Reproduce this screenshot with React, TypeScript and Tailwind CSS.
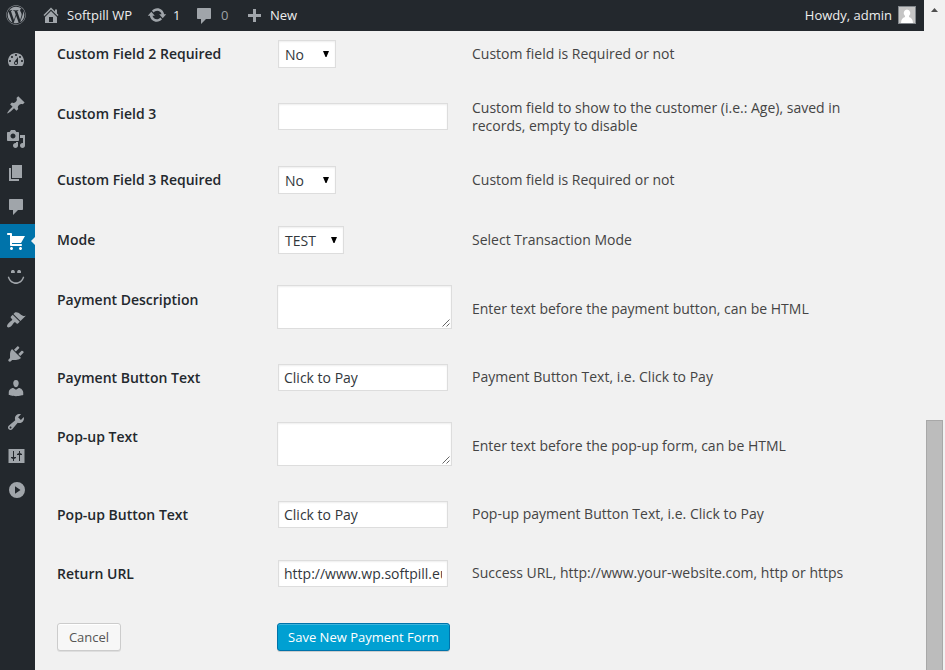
import type { ReactNode } from "react";
import { FaWordpress } from "react-icons/fa";

const icons = {
  home: "M16 8.5l1.53 1.53-1.06 1.06L10 4.6l-6.47 6.49-1.06-1.06L10 2.5l4 4v-2h2v4zm-6-2.46l6 5.99V18H4v-5.97zM12 17v-5H8v5h4z",
  update:
    "M10.2 3.28c3.53 0 6.43 2.61 6.92 6h2.08l-3.5 4-3.5-4h2.32c-.45-1.97-2.21-3.45-4.32-3.45-1.45 0-2.73.71-3.54 1.78L4.95 5.66C6.23 4.2 8.11 3.28 10.2 3.28zm-.4 13.44c-3.52 0-6.43-2.61-6.92-6H.8l3.5-4c1.17 1.33 2.33 2.67 3.5 4H5.48c.45 1.97 2.21 3.45 4.32 3.45 1.45 0 2.73-.71 3.54-1.78l1.71 1.95c-1.28 1.46-3.15 2.38-5.25 2.38z",
  comment: "M4 2h12c.6 0 1 .4 1 1v9c0 .6-.4 1-1 1h-4l-5 5v-5H4c-.6 0-1-.4-1-1V3c0-.6.4-1 1-1z",
  plus: "M17 7v3h-5v5H9v-5H4V7h5V2h3v5h5z",
  dashboard:
    "M3.76 16h12.48c1.1-1.37 1.76-3.11 1.76-5 0-4.42-3.58-8-8-8s-8 3.58-8 8c0 1.89.66 3.63 1.76 5zM10 4c.55 0 1 .45 1 1s-.45 1-1 1-1-.45-1-1 .45-1 1-1zM6 6c.55 0 1 .45 1 1s-.45 1-1 1-1-.45-1-1 .45-1 1-1zm8 0c.55 0 1 .45 1 1s-.45 1-1 1-1-.45-1-1 .45-1 1-1zm-5.37 5.55L12 7v6c0 1.1-.9 2-2 2s-2-.9-2-2c0-.57.24-1.08.63-1.45zM4 10c.55 0 1 .45 1 1s-.45 1-1 1-1-.45-1-1 .45-1 1-1zm12 0c.55 0 1 .45 1 1s-.45 1-1 1-1-.45-1-1 .45-1 1-1zm-5 3c0-.55-.45-1-1-1s-1 .45-1 1 .45 1 1 1 1-.45 1-1z",
  pin: "M10.44 3.02l1.82-1.82 6.36 6.35-1.83 1.82c-1.05-.68-2.48-.57-3.41.36l-.75.75c-.92.93-1.04 2.35-.35 3.41l-1.83 1.82-2.41-2.41-2.8 2.79c-.42.42-3.38 2.71-3.8 2.29s1.86-3.39 2.28-3.81l2.79-2.79L4.1 9.36l1.83-1.82c1.05.69 2.48.57 3.4-.36l.75-.75c.93-.92 1.05-2.35.36-3.41z",
  media:
    "M13 11V4c0-.55-.45-1-1-1h-1.67L9 1H5L3.67 3H2c-.55 0-1 .45-1 1v7c0 .55.45 1 1 1h10c.55 0 1-.45 1-1zM7 4.5c1.38 0 2.5 1.12 2.5 2.5S8.38 9.5 7 9.5 4.5 8.38 4.5 7 5.62 4.5 7 4.5zM14 6h5v10.5c0 1.38-1.12 2.5-2.5 2.5S14 17.88 14 16.500s1.12-2.5 2.5-2.5c.17 0 .34.02.5.05V9h-3V6zm-4 8.05V13h2v3.5c0 1.38-1.12 2.5-2.5 2.5S7 17.88 7 16.500 8.12 14 9.500 14c.17 0 .34.02.5.05z",
  page: "M6 15V2h10v13H6zm-1 1h8v2H3V5h2v11z",
  cart: "M6 13h9c.55 0 1 .45 1 1s-.45 1-1 1H5c-.55 0-1-.45-1-1V4H2c-.55 0-1-.45-1-1s.45-1 1-1h3c.55 0 1 .45 1 1v2h13l-4 7H6v1zm-.5 3c.83 0 1.5.67 1.5 1.5S6.33 19 5.5 19 4 18.33 4 17.5 4.67 16 5.5 16zm9 0c.83 0 1.5.67 1.5 1.500s-.67 1.500-1.500 1.500-1.500-.67-1.500-1.500.67-1.500 1.500-1.500z",
  smiley:
    "M5 8V6.600C5 5.500 5.700 5 6.800 5s2 .5 2 1.600V8zM11.200 8V6.600c0-1.100.8-1.600 1.900-1.600s1.900.5 1.900 1.600V8zM1.700 12C3.200 17 7 19 10 19s6.800-2 8.300-7l-1.300-.5C15.600 15.700 13 17.300 10 17.300S4.400 15.700 3 11.500z",
  brush:
    "M14.48 11.06L7.41 3.99l1.5-1.5c.5-.56 2.3-.47 3.51.32 1.21.8 1.43 1.28 2.91 2.1 1.18.64 2.45 1.26 4.45.85zm-.71.71L6.7 4.7 4.93 6.47c-.39.39-.39 1.02 0 1.41l1.06 1.06c.39.39.39 1.03 0 1.42-.6.6-1.43 1.11-2.21 1.69-.35.26-.7.53-1.01.84C1.43 14.23.4 16.08 1.4 17.07c.99 1 2.84-.03 4.18-1.36.31-.31.58-.66.85-1.02.57-.78 1.08-1.61 1.69-2.21.39-.39 1.02-.39 1.41 0l1.06 1.06c.39.39 1.02.39 1.41 0z",
  plug: "M13.11 4.36L9.87 7.6 8 5.73l3.24-3.24c.35-.34 1.05-.2 1.56.32.52.51.66 1.21.31 1.55zm-8 1.77l.91-1.12 9.01 9.01-1.19.84c-.71.71-2.63 1.16-3.82 1.16H6.14L4.9 17.26c-.59.59-1.54.59-2.12 0-.59-.58-.59-1.53 0-2.12l1.24-1.24v-3.88c0-1.13.4-3.19 1.09-3.89zm7.26 3.97l3.24-3.24c.34-.35 1.04-.21 1.55.31.52.51.66 1.21.31 1.55l-3.24 3.25z",
  user: "M10 9.25c-2.27 0-2.73-3.44-2.73-3.44C7 4.02 7.82 2 9.97 2c2.16 0 2.98 2.02 2.71 3.81 0 0-.41 3.44-2.68 3.44zm0 2.57L12.72 10c2.39 0 4.52 2.33 4.52 4.53v2.49s-3.65 1.13-7.24 1.13c-3.65 0-7.24-1.13-7.24-1.13v-2.49c0-2.25 1.94-4.48 4.47-4.48z",
  wrench:
    "M16.68 9.77c-1.34 1.34-3.3 1.67-4.95.99l-5.41 6.52c-.99.99-2.59.99-3.58 0s-.99-2.59 0-3.57l6.52-5.42c-.68-1.65-.35-3.61.99-4.95 1.28-1.28 3.12-1.62 4.72-1.06l-2.89 2.89 2.82 2.82 2.86-2.87c.53 1.58.18 3.39-1.08 4.65zM3.81 16.21c.4.39 1.04.39 1.43 0 .4-.4.4-1.04 0-1.43-.39-.4-1.03-.4-1.43 0-.39.39-.39 1.03 0 1.43z",
  settings:
    "M2.500 3h16v14h-16zM7 5h1v6h2v1l-2 1v2H7v-2l-2-1v-1h2zM13 5h1v2l2 1v1h-2v6h-1V9h-2V8l2-1z",
  collapse: "M11 2a8 8 0 1 0 0 16a8 8 0 0 0 0-16zM9 6.200l5.500 3.800L9 13.800z",
};

type IconName = keyof typeof icons;

function Icon({ name, className = "" }: { name: IconName; className?: string }) {
  return (
    <svg viewBox="0 0 20 20" className={`size-5 shrink-0 fill-current ${className}`}>
      <path d={icons[name]} fillRule="evenodd" />
    </svg>
  );
}

function AdminBar() {
  return (
    <header className="flex h-[31px] items-center bg-[#23282d] pr-2 text-[13px] text-[#eeeeee]">
      <FaWordpress className="ml-[6px] -mt-px size-5 shrink-0 text-[#a0a5aa]" />
      <Icon name="home" className="ml-[15px] -mt-px text-[#a0a5aa]" />
      <span className="ml-[6px] w-[66px] whitespace-nowrap">Softpill WP</span>
      <Icon name="update" className="ml-[14px] -mt-px text-[#a0a5aa]" />
      <span className="ml-[6px] w-2">1</span>
      <Icon name="comment" className="ml-[13px] mt-px text-[#a0a5aa]" />
      <span className="ml-[7px] w-2 text-[#9ca1a6]">0</span>
      <Icon name="plus" className="ml-[15px] mt-[3px] text-[#a0a5aa]" />
      <span className="ml-[6px]">New</span>
      <span className="ml-auto">Howdy, admin</span>
      <svg viewBox="0 0 18 18" className="ml-[6px] -mt-px size-[18px]">
        <rect width="18" height="18" fill="#82878c" />
        <rect x="1" y="1" width="16" height="16" fill="#c5c5c5" />
        <path d="M9 3.500a3.500 3.700 0 0 0-2 6.600v1C4.500 11.800 3.200 13.500 3 17h12c-.2-3.500-1.500-5.200-4-5.900v-1A3.500 3.700 0 0 0 9 3.500z" fill="#fff" />
      </svg>
    </header>
  );
}

const menu: { icon: IconName; gap?: boolean; active?: boolean }[] = [
  { icon: "dashboard" },
  { icon: "pin", gap: true },
  { icon: "media" },
  { icon: "page" },
  { icon: "comment" },
  { icon: "cart", active: true },
  { icon: "smiley" },
  { icon: "brush", gap: true },
  { icon: "plug" },
  { icon: "user" },
  { icon: "wrench" },
  { icon: "settings" },
  { icon: "collapse" },
];

function Sidebar() {
  return (
    <nav className="w-[35px] shrink-0 bg-[#23282d] pt-3">
      {menu.map((m) => (
        <div
          key={m.icon}
          className={`flex h-[34px] items-center pl-[6px] ${m.gap ? "mt-[11px]" : ""} ${
            m.active ? "bg-[#0073aa] text-white" : "text-[#a0a5aa]"
          }`}
        >
          <Icon name={m.icon} />
          {m.active && <span className="ml-auto border-y-4 border-r-4 border-y-transparent border-r-[#f1f1f1]" />}
        </div>
      ))}
    </nav>
  );
}

const field = "border border-[#dddddd] bg-white text-sm text-[#32373c] shadow-[inset_0_1px_2px_rgba(0,0,0,0.07)]";

function Select({ value, className }: { value: string; className: string }) {
  return (
    <div className={`flex h-7 items-center justify-between pl-[6px] pr-[6px] ${field} ${className}`}>
      <span className="mt-[2px]">{value}</span>
      <svg viewBox="0 0 6 6" className="mb-px h-[6px] w-[6px]">
        <path d="M0 0h6L3.500 6h-1z" fill="#000" />
      </svg>
    </div>
  );
}

function TextInput({ value = "" }: { value?: string }) {
  return (
    <div className={`ml-px flex h-[27px] w-[170px] items-center px-[5px] ${field}`}>
      <span className="mt-px overflow-hidden whitespace-nowrap">{value}</span>
    </div>
  );
}

function TextArea() {
  return (
    <div className={`flex h-11 w-[175px] items-end justify-end p-px ${field}`}>
      <svg viewBox="0 0 8 8" className="size-2" stroke="#666" strokeWidth="1">
        <path d="M0.500 7.500L7.500 0.500M4.500 7.500L7.500 4.500" />
      </svg>
    </div>
  );
}

function Row({
  label,
  height,
  labelTop = "mt-[5px]",
  helpTop = "mt-[5px]",
  help,
  children,
}: {
  label: string;
  height: string;
  labelTop?: string;
  helpTop?: string;
  help: string;
  children: ReactNode;
}) {
  return (
    <div className={`flex items-start ${height}`}>
      <div className={`w-[220px] shrink-0 text-sm leading-[18px] font-semibold text-[#23282d] ${labelTop}`}>{label}</div>
      <div className="w-[195px] shrink-0">{children}</div>
      <p className={`w-[400px] text-sm leading-[18px] text-[#444444] ${helpTop}`}>{help}</p>
    </div>
  );
}

function Form() {
  return (
    <main className="flex-1 pt-[9px] pl-[22px]">
      <Row label="Custom Field 2 Required" height="h-[63px]" help="Custom field is Required or not">
        <Select value="No" className="ml-px w-[58px]" />
      </Row>
      <Row
        label="Custom Field 3"
        height="h-[63px]"
        labelTop="mt-[2px]"
        helpTop="-mt-1"
        help="Custom field to show to the customer (i.e.: Age), saved in records, empty to disable"
      >
        <TextInput />
      </Row>
      <Row label="Custom Field 3 Required" height="h-[60px]" help="Custom field is Required or not">
        <Select value="No" className="ml-px w-[58px]" />
      </Row>
      <Row label="Mode" height="h-[59px]" help="Select Transaction Mode">
        <Select value="TEST" className="ml-px w-[66px]" />
      </Row>
      <Row
        label="Payment Description"
        height="h-[79px]"
        labelTop="mt-[6px]"
        helpTop="mt-[15px]"
        help="Enter text before the payment button, can be HTML"
      >
        <TextArea />
      </Row>
      <Row label="Payment Button Text" height="h-[58px]" helpTop="mt-1" help="Payment Button Text, i.e. Click to Pay">
        <TextInput value="Click to Pay" />
      </Row>
      <Row
        label="Pop-up Text"
        height="h-[79px]"
        labelTop="mt-[6px]"
        helpTop="mt-[15px]"
        help="Enter text before the pop-up form, can be HTML"
      >
        <TextArea />
      </Row>
      <Row label="Pop-up Button Text" height="h-[59px]" helpTop="mt-1" help="Pop-up payment Button Text, i.e. Click to Pay">
        <TextInput value="Click to Pay" />
      </Row>
      <Row
        label="Return URL"
        height="h-[63px]"
        helpTop="mt-1"
        help="Success URL, http://www.your-website.com, http or https"
      >
        <TextInput value="http://www.wp.softpill.eu" />
      </Row>
      <div className="flex text-[13px]">
        <div className="w-[220px]">
          <button className="h-7 w-16 rounded-[3px] border border-[#cccccc] bg-[#f7f7f7] pt-[2px] text-[#555555] shadow-[inset_0_1px_0_#fff,0_1px_0_rgba(0,0,0,0.08)]">
            Cancel
          </button>
        </div>
        <button className="h-7 w-[173px] rounded-[3px] border border-[#0073aa] bg-[#00a0d2] pt-[2px] whitespace-nowrap text-white shadow-[inset_0_1px_0_rgba(120,200,230,0.5),0_1px_0_rgba(0,0,0,0.15)]">
          Save New Payment Form
        </button>
      </div>
    </main>
  );
}

export default function App() {
  return (
    <div className="flex h-[670px] w-[945px] overflow-hidden bg-[#f1f1f1] font-['Open_Sans',sans-serif]">
      <div className="flex w-[924px] flex-col">
        <AdminBar />
        <div className="flex flex-1">
          <Sidebar />
          <Form />
        </div>
      </div>
      <div className="flex flex-1 flex-col pl-[2px]">
        <svg viewBox="0 0 7 4" className="mt-2 ml-[5px] h-1 w-[7px]">
          <path d="M3.500 0L7 4H0z" fill="#505050" />
        </svg>
        <div className="mt-[408px] w-[17px] flex-1 border border-b-0 border-[#a8a8a8] bg-[#bcbcbc]" />
      </div>
    </div>
  );
}
